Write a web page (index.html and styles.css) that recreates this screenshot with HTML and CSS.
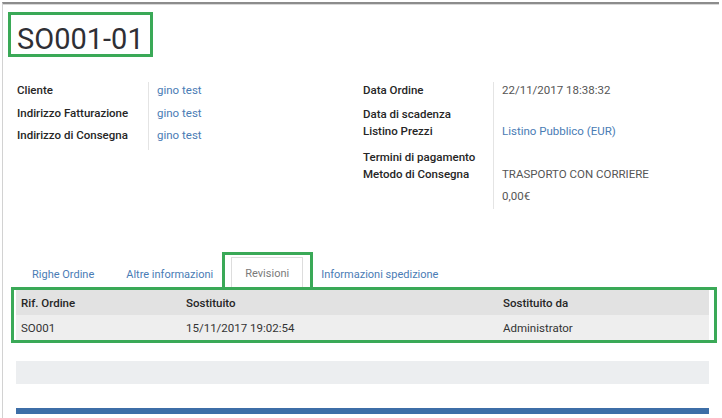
FILE: index.html
```html
<!DOCTYPE html>
<html lang="it">
<head>
<meta charset="utf-8">
<title>SO001-01</title>
<link rel="stylesheet" href="styles.css">
</head>
<body>
<div class="sheet">
  <div class="title-box"><h1 class="title">SO001-01</h1></div>

  <div class="fields">
    <div class="group group-left">
      <div class="lbl">Cliente</div><div class="val link">gino test</div>
      <div class="lbl">Indirizzo Fatturazione</div><div class="val link">gino test</div>
      <div class="lbl">Indirizzo di Consegna</div><div class="val link">gino test</div>
    </div>
    <div class="group group-right">
      <div class="lbl">Data Ordine</div><div class="val">22/11/2017 18:38:32</div>
      <div class="lbl">Data di scadenza</div><div class="val"></div>
      <div class="lbl">Listino Prezzi</div><div class="val link">Listino Pubblico (EUR)</div>
      <div class="lbl">Termini di pagamento</div><div class="val"></div>
      <div class="lbl">Metodo di Consegna</div><div class="val">TRASPORTO CON CORRIERE</div>
      <div class="lbl"></div><div class="val">0,00€</div>
    </div>
  </div>

  <ul class="tabs">
    <li class="tab">Righe Ordine</li>
    <li class="tab">Altre informazioni</li>
    <li class="tab active">Revisioni</li>
    <li class="tab">Informazioni spedizione</li>
  </ul>

  <div class="table-wrap">
    <table class="rev">
      <thead>
        <tr><th class="c1">Rif. Ordine</th><th class="c2">Sostituito</th><th class="c3">Sostituito da</th></tr>
      </thead>
      <tbody>
        <tr><td>SO001</td><td>15/11/2017 19:02:54</td><td>Administrator</td></tr>
      </tbody>
    </table>
  </div>

  <div class="gray-bar"></div>
  <div class="blue-bar"></div>
</div>
</body>
</html>
```

FILE: styles.css
```css
html, body {
  margin: 0;
  padding: 0;
  background: #ffffff;
}

body {
  font-family: Roboto, "Liberation Sans", Arial, sans-serif;
  font-size: 11.5px;
  color: #333333;
  overflow: hidden;
  height: 418px;
}

.sheet {
  margin: 2px 3px 0 2px;
  border-top: 2px solid #8c8c8c;
  border-left: 1px solid #d2d2d2;
  box-shadow: inset 0 1px 0 #d8d8d8;
  height: 420px;
}

.title-box {
  display: inline-block;
  margin: 8px 0 0 5px;
  border: 3px solid #3aa957;
  padding: 10px 10px 0 6px;
  height: 29px;
  width: 123px;
}

.title {
  margin: 0;
  font-size: 29px;
  font-weight: 400;
  line-height: 29px;
  color: #2f2f35;
  white-space: nowrap;
}

.fields {
  display: grid;
  grid-template-columns: 346px 1fr;
  margin-top: 25px;
  padding-left: 14px;
  align-items: start;
}

.group {
  display: grid;
  line-height: 17px;
}

.group-left {
  grid-template-columns: 132px 1fr;
  grid-template-rows: 22.5px 22.5px 22.5px;
}

.group-right {
  grid-template-columns: 131px 1fr;
  grid-template-rows: 24px 17px 26px 17px 22px 21px;
}

.lbl {
  font-weight: 500;
  color: #262626;
  white-space: nowrap;
  border-right: 1px solid #e4e4e4;
}

.val {
  padding-left: 8px;
  color: #555555;
  white-space: nowrap;
}

.link {
  color: #4a7cb5;
}

.tabs {
  list-style: none;
  margin: 48px 0 0 0;
  padding: 0 0 0 15px;
  display: flex;
  gap: 4px;
  height: 33px;
  font-size: 11px;
}

.tab {
  padding: 0 13px;
  line-height: 33px;
  color: #4a7cb5;
  white-space: nowrap;
  box-sizing: border-box;
  border: 1px solid transparent;
  border-bottom: none;
}

.tab.active {
  position: relative;
  color: #7a7a7a;
  border-color: #dddddd;
  background: #ffffff;
  line-height: 31px;
}

.tab.active::after {
  content: "";
  position: absolute;
  left: -10px;
  right: -11px;
  top: -6px;
  bottom: -4px;
  border: 3px solid #3aa957;
}

.table-wrap {
  position: relative;
  margin: 0 10px 0 13px;
}

.table-wrap::after {
  content: "";
  position: absolute;
  left: -5px;
  right: -8px;
  top: -3px;
  bottom: -3px;
  border: 3px solid #3aa957;
  pointer-events: none;
}

.rev {
  width: 100%;
  border-collapse: collapse;
  table-layout: fixed;
}

.rev th, .rev td {
  text-align: left;
  padding: 0 5px;
  height: 25px;
  white-space: nowrap;
}

.rev th {
  background: #e2e2e2;
  font-weight: 500;
  color: #262626;
}

.rev td {
  background: #eeeeee;
  color: #333333;
}

.c1 { width: 155px; }
.c2 { width: 307px; }

.gray-bar {
  margin: 21px 10px 0 13px;
  height: 23px;
  background: #eceef0;
}

.blue-bar {
  margin: 24px 10px 0 13px;
  height: 6px;
  background: #3d6ea7;
}
```
